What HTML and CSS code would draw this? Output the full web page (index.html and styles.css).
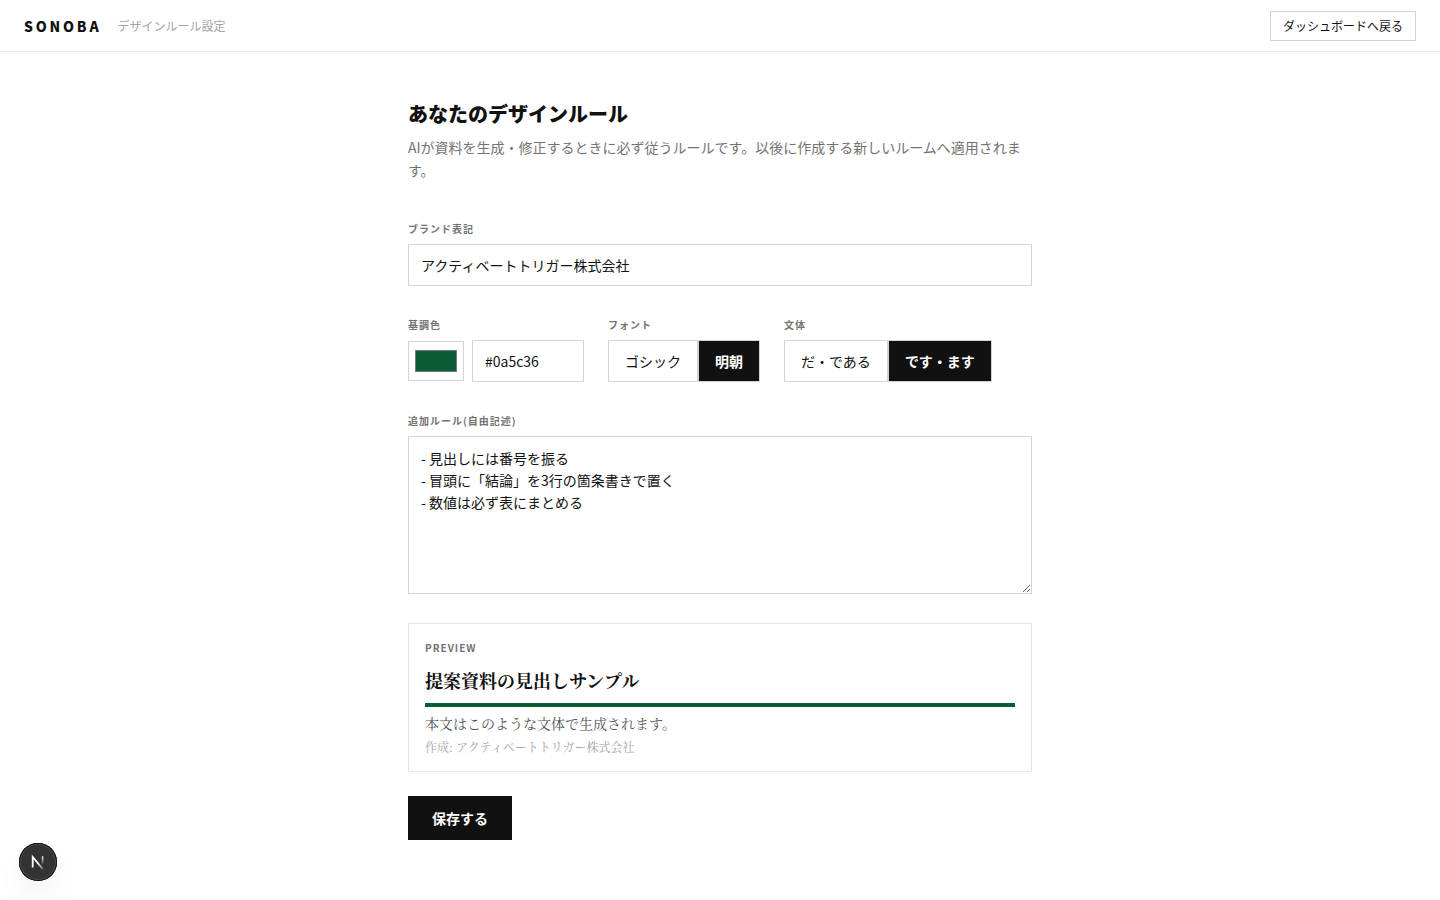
FILE: index.html
```html
<!DOCTYPE html>
<html lang="ja">
<head>
  <meta charset="UTF-8">
  <meta name="viewport" content="width=device-width, initial-scale=1.0">
  <title>SONOBA デザインルール設定</title>
  <link rel="stylesheet" href="styles.css">
</head>
<body>
  <header class="header">
    <div class="header-left">
      <span class="logo">SONOBA</span>
      <span class="header-title">デザインルール設定</span>
    </div>
    <a href="#" class="back-link">ダッシュボードへ戻る</a>
  </header>

  <main class="main">
    <h1 class="title">あなたのデザインルール</h1>
    <p class="lead">AIが資料を生成・修正するときに必ず従うルールです。以後に作成する新しいルームへ適用されます。</p>

    <form class="form">
      <div class="field">
        <label class="label" for="brand">ブランド表記</label>
        <input class="input" id="brand" type="text" value="アクティベートトリガー株式会社">
      </div>

      <div class="row">
        <div class="field">
          <label class="label" for="color-code">基調色</label>
          <div class="color">
            <input class="color-picker" id="color" type="color" value="#0a5c36" aria-label="基調色を選択">
            <input class="input color-code" id="color-code" type="text" value="#0a5c36">
          </div>
        </div>
        <div class="field" role="group" aria-labelledby="font-label">
          <span class="label" id="font-label">フォント</span>
          <div class="segment">
            <button type="button" class="segment-btn" aria-pressed="false">ゴシック</button>
            <button type="button" class="segment-btn active" aria-pressed="true">明朝</button>
          </div>
        </div>
        <div class="field" role="group" aria-labelledby="style-label">
          <span class="label" id="style-label">文体</span>
          <div class="segment">
            <button type="button" class="segment-btn" aria-pressed="false">だ・である</button>
            <button type="button" class="segment-btn active" aria-pressed="true">です・ます</button>
          </div>
        </div>
      </div>

      <div class="field">
        <label class="label" for="rules">追加ルール(自由記述)</label>
        <textarea class="input textarea" id="rules" rows="6">- 見出しには番号を振る
- 冒頭に「結論」を3行の箇条書きで置く
- 数値は必ず表にまとめる</textarea>
      </div>

      <section class="preview">
        <p class="label">PREVIEW</p>
        <div class="preview-body">
          <h2 class="preview-title">提案資料の見出しサンプル</h2>
          <p class="preview-text">本文はこのような文体で生成されます。</p>
          <p class="preview-author">作成: アクティベートトリガー株式会社</p>
        </div>
      </section>

      <button type="submit" class="save">保存する</button>
    </form>
  </main>

  <button type="button" class="dev-badge" aria-label="開発ツールを開く">
    <svg width="38" height="38" viewBox="0 0 38 38" fill="none">
      <defs>
        <linearGradient id="fade-diagonal" x1="20" y1="19" x2="25" y2="26" gradientUnits="userSpaceOnUse">
          <stop stop-color="#fff"/>
          <stop offset="1" stop-color="#fff" stop-opacity="0.2"/>
        </linearGradient>
        <linearGradient id="fade-stem" x1="23" y1="13" x2="23" y2="22" gradientUnits="userSpaceOnUse">
          <stop stop-color="#fff"/>
          <stop offset="1" stop-color="#fff" stop-opacity="0"/>
        </linearGradient>
      </defs>
      <path d="M13.7 24.5V14L24 26.3" stroke="url(#fade-diagonal)" stroke-width="1.8"/>
      <path d="M23.6 13.3V23" stroke="url(#fade-stem)" stroke-width="1.6"/>
    </svg>
  </button>
</body>
</html>
```
FILE: styles.css
```css
* {
  box-sizing: border-box;
}

body {
  margin: 0;
  background: #fff;
  color: #111;
  font-family: "Noto Sans CJK JP", sans-serif;
  font-size: 14px;
  line-height: 20px;
}

h1,
h2,
p {
  margin: 0;
}

button,
input,
textarea {
  font: inherit;
  color: inherit;
  border-radius: 0;
}

button {
  cursor: pointer;
}

/* header */
.header {
  display: flex;
  align-items: center;
  justify-content: space-between;
  padding: 11px 24px 10px;
  border-bottom: 1px solid #e5e5e5;
}

.header-left {
  display: flex;
  align-items: center;
  gap: 16px;
}

.logo {
  font-weight: 900;
  letter-spacing: 0.2em;
}

.header-title {
  color: #a3a3a3;
  font-size: 12px;
  line-height: 16px;
}

.back-link {
  padding: 6px 12px;
  border: 1px solid #d4d4d4;
  color: #111;
  font-size: 12px;
  line-height: 16px;
  text-decoration: none;
}

/* form */
.main {
  max-width: 672px;
  margin: 0 auto;
  padding: 48px 24px;
}

.title {
  font-size: 20px;
  font-weight: 900;
  line-height: 28px;
}

.lead {
  margin-top: 8px;
  color: #737373;
  line-height: 23px;
}

.form {
  display: flex;
  flex-direction: column;
  margin-top: 37px;
}

.field {
  margin-bottom: 29px;
}

.label {
  display: block;
  margin-bottom: 6px;
  color: #737373;
  font-size: 10px;
  font-weight: 700;
  line-height: 19px;
  letter-spacing: 1px;
}

.input {
  display: block;
  width: 100%;
  padding: 10px 12px;
  border: 1px solid #d4d4d4;
  background: #fff;
  outline: none;
}

.input:focus {
  border-color: #111;
}

.row {
  display: flex;
  flex-wrap: wrap;
  column-gap: 24px;
}

.color {
  display: flex;
  align-items: center;
  gap: 8px;
}

.color-picker {
  width: 56px;
  height: 40px;
  padding: 4px;
  border: 1px solid #d4d4d4;
  background: #fff;
  cursor: pointer;
}

.color-code {
  width: 112px;
}

.segment {
  display: flex;
}

.segment-btn {
  padding: 10px 16px;
  border: 1px solid #d4d4d4;
  background: #fff;
}

.segment-btn.active {
  background: #111;
  color: #fff;
  font-weight: 700;
}

.textarea {
  height: 158px;
  line-height: 22px;
  resize: vertical;
}

/* preview */
.preview {
  padding: 14px 16px 16px;
  border: 1px solid #e5e5e5;
}

.preview .label {
  margin-bottom: 9px;
}

.preview-body {
  font-family: "Noto Serif CJK JP", "Noto Serif JP", serif;
}

.preview-title {
  padding-bottom: 9px;
  border-bottom: 4px solid #0a5c36;
  font-size: 18px;
  font-weight: 700;
  line-height: 28px;
}

.preview-text {
  margin-top: 6px;
  color: #525252;
}

.preview-author {
  margin-top: 6px;
  color: #a3a3a3;
  font-size: 12px;
  line-height: 16px;
}

.save {
  align-self: flex-start;
  margin-top: 24px;
  padding: 12px 24px;
  border: none;
  background: #111;
  color: #fff;
  font-weight: 700;
}

/* floating badge */
.dev-badge {
  position: fixed;
  left: 19px;
  bottom: 19px;
  width: 38px;
  height: 38px;
  padding: 0;
  border: none;
  border-radius: 50%;
  background: #333;
  box-shadow: inset 0 0 0 1px #111, inset 0 0 0 2px #4d4d4d, 0 16px 32px -8px rgba(0, 0, 0, 0.14);
}

.dev-badge svg {
  display: block;
}
```
